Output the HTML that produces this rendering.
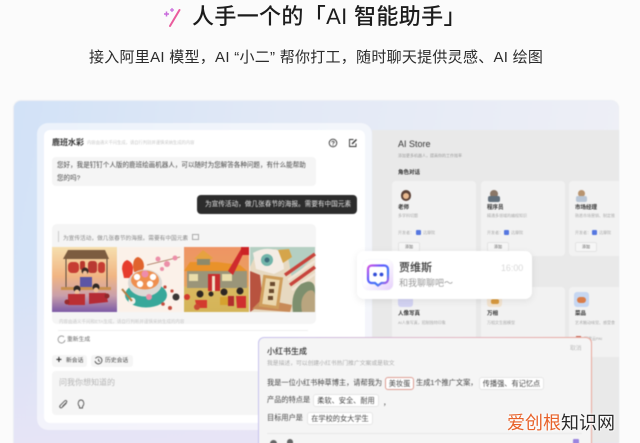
<!DOCTYPE html>
<html lang="zh">
<head>
<meta charset="utf-8">
<style>
html,body{margin:0;padding:0;width:640px;height:443px;overflow:hidden;background:#fbfbfb}
body{position:relative;font-family:"Liberation Sans","Noto Sans CJK SC",sans-serif;color:#222}
div,span{position:absolute;white-space:nowrap;box-sizing:border-box}
svg{position:absolute;overflow:visible}
.b{filter:blur(.45px)}
.card{background:#f2f2f2;border-radius:4px;width:84px}
.t{font-size:5.5px;font-weight:700;color:#333}
.s{font-size:4px;color:#aaa}
.add{width:22px;height:10px;border:1px solid #e4e4e4;border-radius:2px;font-size:4px;color:#555;text-align:center;line-height:8px;background:#f6f6f6}
.chip{background:#fff;border:1px solid #e6e6e6;border-radius:3px;font-size:7.2px;color:#444;height:13px;line-height:11px;text-align:center}
.l{font-size:7.2px;color:#444}
</style>
</head>
<body>
<svg style="left:163px;top:6px" width="24" height="24" viewBox="0 0 24 24">
<path d="M7 20 L16.500 4" stroke="#ea5c9d" stroke-width="2" stroke-linecap="round"/>
<path d="M3.500 5.500v5M1 8h5" stroke="#c96bdc" stroke-width="1.500"/>
<path d="M9 2v4M7 4h4" stroke="#c96bdc" stroke-width="1.200"/>
</svg>
<div style="left:192px;top:3px;font-size:22px;line-height:28px;color:#1c1c1c;letter-spacing:.35px;font-weight:500">人手一个的「AI 智能助手」</div>
<div style="left:89px;top:47px;font-size:15px;line-height:22px;color:#2b2b2b;letter-spacing:.27px">接入阿里AI 模型，AI “小二” 帮你打工，随时聊天提供灵感、AI 绘图</div>

<div style="left:13px;top:100px;width:606px;height:360px;border-radius:8px;border:1px solid #ebeef3;background:linear-gradient(100deg,#d2e2f7 0%,#e2e9f6 40%,#f0f0f6 100%);overflow:hidden" class="b">
<div style="left:0;top:170px;width:606px;height:190px;background:linear-gradient(180deg,rgba(232,230,246,0),#e8e4f6)"></div>
</div>

<!-- store -->
<div class="b" style="left:372px;top:130px;width:247px;height:313px;background:#e9e9e9">
<div style="left:26px;top:8px;font-size:9px;color:#333;line-height:12px">AI Store</div>
<div class="s" style="left:26px;top:23px;color:#999">添加更多机器人，提高你的工作效率</div>
<div class="t" style="left:26px;top:38px">角色对话</div>

<div class="card" style="left:20px;top:51px;height:75px"></div>
<div class="card" style="left:109px;top:51px;height:75px"></div>
<div class="card" style="left:197px;top:51px;height:75px;width:50px;border-radius:4px 0 0 4px"></div>

<div style="left:29px;top:60px;width:10px;height:11px;border-radius:5px;background:#5d4338"></div>
<div style="left:31px;top:63px;width:6px;height:6px;border-radius:3px;background:#e9b98f"></div>
<div style="left:118px;top:60px;width:8px;height:8px;border-radius:4px;background:#8a7767"></div>
<div style="left:116px;top:66px;width:12px;height:6px;border-radius:2px;background:#62707c"></div>
<div style="left:206px;top:60px;width:7px;height:7px;border-radius:4px;background:#b8946f"></div>
<div style="left:204px;top:66px;width:11px;height:6px;border-radius:2px;background:#b9c6d6"></div>

<div class="t" style="left:26px;top:73px">老师</div>
<div class="s" style="left:26px;top:83px">多学科切题</div>
<div class="s" style="left:26px;top:100px">开发者：</div>
<div style="left:44px;top:100px;width:5px;height:5px;background:#5577e0;border-radius:1px"></div>
<div class="s" style="left:51px;top:100px">达摩院</div>
<div class="add" style="left:26px;top:112px">添加</div>

<div class="t" style="left:115px;top:73px">程序员</div>
<div class="s" style="left:115px;top:83px">精通多领域的编程知识</div>
<div class="s" style="left:115px;top:100px">开发者：</div>
<div style="left:132px;top:100px;width:5px;height:5px;background:#5577e0;border-radius:1px"></div>
<div class="s" style="left:139px;top:100px">达摩院</div>
<div class="add" style="left:115px;top:112px">添加</div>

<div class="t" style="left:203px;top:73px">市场经理</div>
<div class="s" style="left:203px;top:83px">熟悉市场营销、制定推</div>
<div class="s" style="left:203px;top:100px">开发者：</div>
<div style="left:220px;top:100px;width:5px;height:5px;background:#5577e0;border-radius:1px"></div>
<div class="s" style="left:227px;top:100px">达摩院</div>
<div class="add" style="left:203px;top:112px">添加</div>

<div class="card" style="left:20px;top:157px;height:70px"></div>
<div class="card" style="left:109px;top:157px;height:70px"></div>
<div class="card" style="left:197px;top:157px;height:70px;width:50px;border-radius:4px 0 0 4px"></div>
<div style="left:202px;top:162px;width:15px;height:15px;border-radius:3px;background:#c6d7f2"></div>
<div style="left:205px;top:167px;width:9px;height:6px;border-radius:3px;background:#d97d4a"></div>
<div style="left:26px;top:162px;width:15px;height:15px;border-radius:3px;background:#d3d3f2"></div>
<div style="left:115px;top:162px;width:15px;height:15px;border-radius:3px;background:#f2e3cf"></div>
<div style="left:119px;top:169px;width:8px;height:5px;border-radius:2px;background:#d99a3f"></div>
<div class="t" style="left:26px;top:179px">人像写真</div>
<div class="s" style="left:26px;top:190px">AI人像写真，招制独特印象</div>
<div class="t" style="left:115px;top:179px">万相</div>
<div class="s" style="left:115px;top:190px">万相文生图模型</div>
<div class="t" style="left:203px;top:179px">菜品</div>
<div class="s" style="left:203px;top:190px">艺术触动味觉、感受食</div>
<div class="s" style="left:212px;top:206px">阿里云PAI</div>
<div style="left:204px;top:206px;width:5px;height:5px;background:#c96c5a"></div>
</div>

<!-- left card -->
<div class="b" style="left:37px;top:123px;width:335px;height:307px;border-radius:11px;background:rgba(255,255,255,.55)"></div>
<div class="b" style="left:44px;top:130px;width:321px;height:293px;border-radius:6px;background:#fff">
<div style="left:8px;top:7px;font-size:8px;font-weight:700;color:#333;line-height:11px">鹿班水彩</div>
<div style="left:43px;top:10px;font-size:4.300px;color:#c9c9c9">内容由通义千问生成，请自行判别并谨慎采纳生成的内容</div>
<svg style="left:284px;top:8px" width="10" height="10" viewBox="0 0 10 10"><circle cx="5" cy="5" r="3.800" fill="none" stroke="#333" stroke-width=".9"/><path d="M3.800 4.200C3.900 2.900 6.200 2.900 6.200 4.200C6.200 5 5 5 5 6" fill="none" stroke="#333" stroke-width=".8"/><circle cx="5" cy="7.100" r=".5" fill="#333"/></svg>
<svg style="left:304px;top:8px" width="10" height="10" viewBox="0 0 10 10"><path d="M8 5.500V8.500H1.500V1.500H5.500" fill="none" stroke="#333" stroke-width=".9"/><path d="M4 6L8.500 1.500" stroke="#333" stroke-width="1.300"/></svg>

<div style="left:8px;top:27px;width:264px;height:29px;background:#f5f5f5;border-radius:4px"></div>
<div style="left:13px;top:29px;font-size:6.550px;line-height:13px;color:#444;white-space:normal;width:251px">您好，我是钉钉个人版的鹿班绘画机器人，可以随时为您解答各种问题，有什么能帮助您的吗?</div>

<div style="left:153px;top:65px;width:160px;height:19px;background:#2c2c2c;border-radius:4px;color:#e8e8e8;font-size:6.650px;line-height:19px;padding-left:8px">为宣传活动，做几张春节的海报。需要有中国元素</div>

<div style="left:8px;top:94px;width:264px;height:100px;background:#f5f5f5;border-radius:5px"></div>
<div style="left:14px;top:101px;width:1px;height:11px;background:#ccc"></div>
<div style="left:19px;top:103px;font-size:5.700px;color:#888">为宣传活动，做几张春节的海报。需要有中国元素</div>
<div style="left:148px;top:104px;width:7px;height:6px;border:.7px solid #aaa"></div>

<svg style="left:8px;top:117px;filter:blur(.3px)" width="264" height="65" viewBox="0 0 264 65">
<defs>
<linearGradient id="g1" x1="0" y1="0" x2="0" y2="1"><stop offset="0" stop-color="#f6dfae"/><stop offset=".45" stop-color="#f1b583"/><stop offset=".75" stop-color="#c9a0ab"/><stop offset="1" stop-color="#7c5aa6"/></linearGradient>
<linearGradient id="g3" x1="0" y1="0" x2="0" y2="1"><stop offset="0" stop-color="#ef9464"/><stop offset=".6" stop-color="#e8a35f"/><stop offset=".62" stop-color="#d9b85f"/><stop offset="1" stop-color="#d4b458"/></linearGradient>
</defs>
<rect width="65" height="65" fill="url(#g1)"/>
<path d="M11 12L16 3H53L57 12Z" fill="#7c5c40"/>
<path d="M14 12V40M55 12V40" stroke="#5a4a3c" stroke-width="1"/>
<rect x="16" y="15" width="11" height="11" rx="4" fill="#c63d33"/><rect x="28" y="14" width="5" height="9" rx="2" fill="#b8362c"/>
<rect x="36" y="14" width="9" height="12" rx="3" fill="#b93a32"/><rect x="46" y="15" width="7" height="11" rx="3" fill="#c63d33"/>
<rect x="28" y="30" width="12" height="10" fill="#5b55a4"/><circle cx="33" cy="24" r="3.500" fill="#3c2b25"/><circle cx="33" cy="26" r="2.200" fill="#eebf98"/>
<rect x="9" y="40" width="50" height="3" fill="#c9904f"/>
<circle cx="25" cy="42" r="3.500" fill="#2d2725"/><circle cx="44" cy="40" r="3.500" fill="#2d2725"/>
<circle cx="25" cy="45" r="2.500" fill="#eebf98"/><circle cx="44" cy="43" r="2.500" fill="#eebf98"/>
<path d="M16 58V47H33V58Z" fill="#bb2f33"/><path d="M37 57V46H54L56 55Z" fill="#b52b35"/>
<circle cx="15" cy="55" r="2.500" fill="#972c2e"/><circle cx="55" cy="49" r="2.500" fill="#8e2a2c"/>

<rect x="66" width="65" height="65" fill="#fbf1e9"/>
<path d="M70 22Q70 15 75 13Q81 15 81 22L80 31H72Z" fill="#e63c2d"/>
<path d="M81 20Q81 11 86 10Q92 12 92 20L90 25H82Z" fill="#e0632d"/>
<ellipse cx="94" cy="48" rx="21" ry="12.500" fill="#38a89a"/>
<ellipse cx="93" cy="36" rx="17" ry="13.500" fill="#dcd9d5"/>
<ellipse cx="93" cy="33" rx="14" ry="9.500" fill="#ef8f4f"/>
<circle cx="85" cy="30" r="3.200" fill="#fff"/><circle cx="93" cy="27" r="3.500" fill="#ee8cab"/><circle cx="101" cy="30" r="3.200" fill="#fff"/><circle cx="88" cy="37" r="3.200" fill="#fff"/><circle cx="98" cy="37" r="3.200" fill="#fff"/>
<circle cx="80" cy="54" r="3.500" fill="#f3f0ea"/><path d="M70 42L80 54" stroke="#b57d45" stroke-width="2"/>
<path d="M95 18L128 10" stroke="#a26a4f" stroke-width=".7"/>
<g fill="#ec8fa8"><circle cx="106" cy="12" r="2.500"/><circle cx="115" cy="17" r="3"/><circle cx="123" cy="11" r="2.500"/><circle cx="110" cy="22" r="2"/><circle cx="97" cy="50" r="3"/></g>
<circle cx="124" cy="50" r="3.500" fill="#3a3735"/>
<g fill="#c44d3f"><circle cx="113" cy="40" r="1.600"/><circle cx="120" cy="44" r="1.600"/><circle cx="118" cy="61" r="2"/><circle cx="111" cy="57" r="1.800"/></g>

<rect x="132" width="65" height="65" fill="url(#g3)"/>
<path d="M132 24L138 15H165L188 18L195 24H150Z" fill="#e9922a"/>
<path d="M142 12L151 3L161 11L158 13Z" fill="#e6a240"/><rect x="145" y="12" width="13" height="6" fill="#8e8a6a"/>
<rect x="135" y="24" width="60" height="17" fill="#9a9579"/>
<rect x="137" y="27" width="9" height="7" fill="#e9ddab"/><rect x="170" y="27" width="10" height="7" fill="#e9ddab"/>
<rect x="156" y="27" width="12" height="17" fill="#c72d2d"/><rect x="160" y="29" width="3" height="15" fill="#f2e2c9"/>
<path d="M176 24L189 2L194 1L181 28Z" fill="#cf2b2d"/><rect x="189" width="8" height="8" fill="#cc2225"/>
<g fill="#2e2623"><circle cx="148" cy="47" r="3.500"/><circle cx="172" cy="45" r="3.500"/><circle cx="188" cy="44" r="3.500"/><circle cx="159" cy="47" r="2.500"/></g>
<path d="M143 53H155V61H145Z" fill="#d33b2e"/><path d="M168 50H177V58H168Z" fill="#d6a22f"/><path d="M184 49H194V61H185Z" fill="#cf2f2f"/><path d="M176 49H182V59H176Z" fill="#b12d2d"/>
<circle cx="135" cy="50" r="3" fill="#d33b2e"/><circle cx="145" cy="60" r="3" fill="#c94a34"/>

<rect x="198" width="65" height="65" fill="#b4cfc2"/>
<path d="M198 65V20L205 5L224 2L236 10L240 32L263 8V42L248 55L240 65Z" fill="#e7d9c1"/>
<path d="M201 6Q214 -2 230 5L232 22L222 27L204 22Z" fill="#f4ece4"/>
<circle cx="215" cy="13" r="6" fill="#71b4a9"/><circle cx="215" cy="13" r="2.500" fill="#3d6e7c"/>
<path d="M226 3L237 2L240 10L231 16Z" fill="#d5a54b"/>
<path d="M233 28L263 7" stroke="#c8443c" stroke-width="3.500"/>
<path d="M236 33L263 14" stroke="#f1e5d6" stroke-width="2.500"/>
<path d="M238 38L263 20" stroke="#c8443c" stroke-width="3.500"/>
<path d="M240 43L263 27" stroke="#f1e5d6" stroke-width="2.500"/>
<path d="M198 24L208 28L211 56L198 65Z" fill="#b8533f"/>
<path d="M200 62L238 65L240 58L210 52Z" fill="#c88a58"/>
<rect x="209" y="29" width="20" height="32" transform="rotate(8 219 45)" fill="#cf9e5c"/>
<rect x="212" y="32" width="14" height="26" transform="rotate(8 219 45)" fill="#ead6ac"/>
<g fill="#6a4a2e"><rect x="218" y="35" width="5" height="4"/><rect x="217" y="42" width="5" height="4"/><rect x="216" y="49" width="5" height="4"/></g>
<path d="M241 65Q238 46 249 37Q263 30 263 44V65Z" fill="#7d8f6e"/>
<path d="M250 65Q247 50 256 44Q263 41 263 50V65Z" fill="#b9a57f"/>
</svg>
</div>
<div class="b" style="left:59px;top:319px;font-size:4.500px;color:#c9c9c9">内容由通义千问和ETA生成，请自行判断并谨慎采纳生成的内容</div>
<div class="b" style="left:58px;top:330px;width:250px;height:1px;background:#eee"></div>
<svg class="b" style="left:57px;top:335px" width="9" height="9" viewBox="0 0 9 9"><path d="M7 2A3.500 3.500 0 1 0 8 5" fill="none" stroke="#999" stroke-width=".9"/></svg>
<div class="b" style="left:67px;top:336px;font-size:5.800px;line-height:9px;color:#666">重新生成</div>

<div class="b" style="left:52px;top:355px;width:35px;height:12px;background:#f5f5f5;border-radius:3px"></div>
<div class="b" style="left:56px;top:354px;font-size:10px;line-height:13px;color:#333;font-weight:700">+</div>
<div class="b" style="left:66px;top:358px;font-size:5.800px;line-height:7px;color:#444">新会话</div>
<div class="b" style="left:91px;top:355px;width:42px;height:12px;background:#f5f5f5;border-radius:3px"></div>
<svg class="b" style="left:94px;top:356px" width="9" height="9" viewBox="0 0 9 9"><path d="M1.500 2.500A3.500 3.500 0 1 1 1 5M4.500 2.800V4.800L6 5.500" fill="none" stroke="#444" stroke-width=".8"/></svg>
<div class="b" style="left:105px;top:358px;font-size:5.800px;line-height:7px;color:#444">历史会话</div>

<div class="b" style="left:52px;top:371px;width:212px;height:44px;background:#f5f5f5;border-radius:4px"></div>
<div class="b" style="left:59px;top:377px;font-size:8px;line-height:11px;color:#b5b5b5">问我你想知道的</div>
<svg class="b" style="left:58px;top:399px" width="11" height="11" viewBox="0 0 11 11"><path d="M8.500 4L4.300 8.200C2.500 10 .8 7.800 2.300 6.300L6.800 1.800C8 .8 9.500 2.200 8.400 3.400L4.400 7.400" fill="none" stroke="#555" stroke-width=".9"/></svg>
<svg class="b" style="left:76px;top:399px" width="10" height="11" viewBox="0 0 10 11"><path d="M3.500 7.500C1 5 2.500 1 5 1S9 5 6.500 7.500V9H3.500Z" fill="none" stroke="#555" stroke-width=".9"/></svg>

<!-- notification -->
<div class="b" style="left:357px;top:251px;width:175px;height:48px;background:#fff;border-radius:7px;box-shadow:0 2px 8px rgba(0,0,0,.08)"></div>
<div class="b" style="left:363px;top:260px;width:30px;height:30px;border-radius:6px;background:linear-gradient(135deg,#fff 40%,#e5cffb 100%);box-shadow:0 0 1px #dcdcea"></div>
<svg class="b" style="left:363px;top:260px" width="30" height="30" viewBox="0 0 30 30">
<defs><linearGradient id="jv" x1="0" y1="0" x2="1" y2="1"><stop offset="0" stop-color="#d453e3"/><stop offset=".35" stop-color="#5e5bff"/><stop offset=".7" stop-color="#3f7af5"/><stop offset="1" stop-color="#d453e3"/></linearGradient></defs>
<path d="M9 5.500H21C23.500 5.500 25 7 25 9.500V19C25 21.500 23.500 23 21 23H18.500L15 25.500L12 23H9C6.500 23 5 21.500 5 19V9.500C5 7 6.500 5.500 9 5.500Z" fill="#fff" stroke="url(#jv)" stroke-width="2.200"/>
<circle cx="12" cy="14.500" r="1.900" fill="#2f4bd8"/><circle cx="18.500" cy="14.500" r="1.900" fill="#2f4bd8"/>
</svg>
<div class="b" style="left:399px;top:261px;font-size:11px;line-height:14px;color:#333;font-weight:500">贾维斯</div>
<div class="b" style="left:399px;top:277px;font-size:9px;line-height:13px;color:#999">和我聊聊吧～</div>
<div class="b" style="left:501px;top:262px;font-size:8.900px;line-height:12px;color:#d8d8d8">16:00</div>

<!-- dialog -->
<div class="b" style="left:258px;top:337px;width:334px;height:120px;border-radius:6px;background:linear-gradient(90deg,#c7c2ee,#e3b6c2 60%,#e8a79c);padding:1px">
<div style="left:1px;top:1px;width:332px;height:118px;border-radius:5px;background:#f5f5f5">
<div style="left:8px;top:8px;font-size:8px;line-height:11px;color:#333;font-weight:500">小红书生成</div>
<div style="left:8px;top:22px;font-size:5.800px;line-height:8px;color:#aaa">我是描述，可以创建小红书热门推广文案或是软文</div>
<div style="left:311px;top:7px;font-size:5.800px;line-height:8px;color:#bbb">取消</div>
<div class="l" style="left:8px;top:38px;line-height:14px">我是一位小红书种草博主，请帮我为</div>
<div class="chip" style="left:126px;top:39px;width:29px;border-color:#dd9d93">美妆蛋</div>
<div class="l" style="left:157px;top:38px;line-height:14px">生成1个推广文案，</div>
<div class="chip" style="left:220px;top:39px;width:65px">传播强、有记忆点</div>
<div class="l" style="left:8px;top:55px;line-height:14px">产品的特点是</div>
<div class="chip" style="left:54px;top:56px;width:66px">柔软、安全、耐用</div>
<div class="l" style="left:124px;top:58px;line-height:14px">，</div>
<div class="l" style="left:8px;top:73px;line-height:14px">目标用户是</div>
<div class="chip" style="left:48px;top:74px;width:66px">在学校的女大学生</div>
<div style="left:8px;top:95px;width:315px;height:1px;background:#e8e8e8"></div>
<div style="left:11px;top:102px;width:7px;height:7px;border-radius:4px;background:#666"></div>
<div style="left:28px;top:101px;width:6px;height:8px;border-radius:3px;background:#666"></div>
<div style="left:314px;top:101px;width:6px;height:6px;background:#9a85df;border-radius:1px"></div>
</div>
</div>

<!-- watermark -->
<div style="left:507px;top:411px;font-size:18px;line-height:24px;letter-spacing:0;color:#e7622a;text-shadow:0 0 2px #fff,0 0 2px #fff,0 0 3px #fff">爱创根<span style="position:static;color:#2a2a2a">知识网</span></div>
</body>
</html>
